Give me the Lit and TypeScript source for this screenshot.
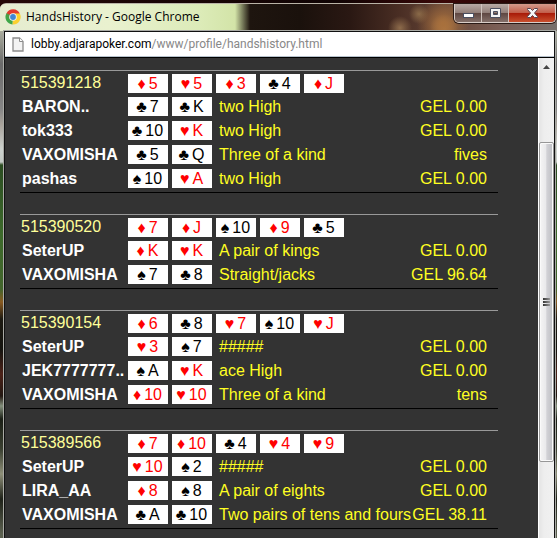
import { LitElement, html, css, svg } from "lit";
import { customElement, property } from "lit/decorators.js";

interface Player {
  name: string;
  cards: string[];
  result: string;
  amount: string;
}

interface Hand {
  id: string;
  board: string[];
  players: Player[];
}

const player = (name: string, cards: string, result: string, amount: string): Player => ({
  name,
  cards: cards.split(" "),
  result,
  amount,
});

const HANDS: Hand[] = [
  {
    id: "515391218",
    board: ["♦5", "♥5", "♦3", "♣4", "♦J"],
    players: [
      player("BARON..", "♣7 ♣K", "two High", "GEL 0.00"),
      player("tok333", "♣10 ♥K", "two High", "GEL 0.00"),
      player("VAXOMISHA", "♣5 ♣Q", "Three of a kind", "fives"),
      player("pashas", "♠10 ♥A", "two High", "GEL 0.00"),
    ],
  },
  {
    id: "515390520",
    board: ["♦7", "♦J", "♠10", "♦9", "♣5"],
    players: [
      player("SeterUP", "♦K ♥K", "A pair of kings", "GEL 0.00"),
      player("VAXOMISHA", "♠7 ♣8", "Straight/jacks", "GEL 96.64"),
    ],
  },
  {
    id: "515390154",
    board: ["♦6", "♣8", "♥7", "♠10", "♥J"],
    players: [
      player("SeterUP", "♥3 ♠7", "#####", "GEL 0.00"),
      player("JEK7777777..", "♠A ♥K", "ace High", "GEL 0.00"),
      player("VAXOMISHA", "♦10 ♥10", "Three of a kind", "tens"),
    ],
  },
  {
    id: "515389566",
    board: ["♦7", "♦10", "♣4", "♥4", "♥9"],
    players: [
      player("SeterUP", "♥10 ♠2", "#####", "GEL 0.00"),
      player("LIRA_AA", "♦8 ♠8", "A pair of eights", "GEL 0.00"),
      player("VAXOMISHA", "♣A ♣10", "Two pairs of tens and fours", "GEL 38.11"),
    ],
  },
];

@customElement("playing-cards")
export class PlayingCards extends LitElement {
  @property({ attribute: false }) cards: string[] = [];

  static styles = css`
    :host {
      display: flex;
      gap: 4px;
    }
    .card {
      box-sizing: border-box;
      display: flex;
      flex: none;
      justify-content: center;
      gap: 3px;
      width: 40px;
      height: 19px;
      padding-right: 1px;
      background: #fff;
      color: #000;
      line-height: 19px;
    }
    .red {
      color: #f00;
    }
  `;

  render() {
    return this.cards.map(
      (c) => html`<span class="card ${"♦♥".includes(c[0]) ? "red" : ""}"
        ><span>${c[0]}</span><span>${c.slice(1)}</span></span
      >`
    );
  }
}

@customElement("hand-table")
export class HandTable extends LitElement {
  @property({ attribute: false }) hand!: Hand;

  static styles = css`
    :host {
      display: block;
      border-top: 1px solid #999;
      border-bottom: 1px solid #000;
      padding-bottom: 1px;
    }
    table {
      width: 100%;
      table-layout: fixed;
      border-spacing: 0;
    }
    .name-col {
      width: 108px;
    }
    .cards-col {
      width: 91px;
    }
    .amount-col {
      width: 90px;
    }
    th,
    td {
      box-sizing: border-box;
      height: 24px;
      padding: 0;
      line-height: 24px;
      white-space: nowrap;
      text-align: left;
      vertical-align: top;
      color: #ff2;
    }
    .id {
      padding-left: 1px;
      font-weight: 400;
      color: #ff9;
    }
    .name {
      padding-left: 2px;
      color: #fff;
    }
    .board {
      padding-top: 3px;
    }
    .hole {
      padding-top: 2px;
    }
    .amount {
      padding-right: 11px;
      text-align: right;
    }
  `;

  render() {
    return html`<table>
      <colgroup>
        <col class="name-col" />
        <col class="cards-col" />
        <col />
        <col class="amount-col" />
      </colgroup>
      <thead>
        <tr>
          <th class="id" scope="col">${this.hand.id}</th>
          <td class="board" colspan="3">
            <playing-cards .cards=${this.hand.board}></playing-cards>
          </td>
        </tr>
      </thead>
      <tbody>
        ${this.hand.players.map(
          (p) => html`<tr>
            <th class="name" scope="row">${p.name}</th>
            <td class="hole"><playing-cards .cards=${p.cards}></playing-cards></td>
            <td>${p.result}</td>
            <td class="amount">${p.amount}</td>
          </tr>`
        )}
      </tbody>
    </table>`;
  }
}

const chromeLogo = svg`
  <path d="M8 8 L1.5 4.2 A7.5 7.5 0 0 1 14.8 4.6 Z" fill="#e33b2e"/>
  <path d="M8 8 L14.8 4.6 A7.5 7.5 0 0 1 7.4 15.5 Z" fill="#fbd12f"/>
  <path d="M8 8 L7.4 15.5 A7.5 7.5 0 0 1 1.5 4.2 Z" fill="#3fa648"/>
  <path d="M8 4.6 H14.8 L11 9.5 Z" fill="#fbd12f"/>
  <path d="M1.5 4.2 L5 10 L8 4.6 Z" fill="#e33b2e"/>
  <path d="M1.5 4.2 L4.9 9.8 L5 6 Z" fill="#3fa648"/>
  <circle cx="8" cy="8" r="3.8" fill="#f4f6f4"/>
  <circle cx="8" cy="8" r="2.9" fill="#3f86d6"/>`;

@customElement("app-root")
export class AppRoot extends LitElement {
  static styles = css`
    :host {
      display: flex;
      flex-direction: column;
      box-sizing: border-box;
      height: 100vh;
      padding-top: 3px;
      overflow: hidden;
      background: linear-gradient(90deg, #250706, #100404 60%, #3a0808 80%, #1a0303);
      font: 16px "Liberation Sans", Arial, sans-serif;
    }
    .window {
      flex: 1;
      min-height: 0;
      display: flex;
      flex-direction: column;
      padding: 0 2px 0 4px;
      border-top: 1px solid #b9b3a6;
      border-top-left-radius: 6px;
      background: linear-gradient(
        #c9d1b4 0,
        #a9ab9d 28px,
        #6a6a6a 60px,
        #868686 105px,
        #a8a29a 120px,
        #cdd2ce 145px,
        #c3c9c4 158px,
        #2c4d22 161px,
        #3d6a2b 230px,
        #43652c 285px,
        #8a5a20 298px,
        #1d1a12 315px,
        #15140f 345px,
        #4c2218 370px,
        #231812 392px,
        #84907c 402px,
        #1b1f16 415px,
        #3a3f30 445px,
        #8e8f78 470px,
        #1f2219 495px,
        #5c6150 530px
      );
    }
    .titlebar {
      display: flex;
      align-items: flex-start;
      height: 27px;
      margin: 0 -2px 0 -4px;
      border-top-left-radius: 5px;
      background:
        radial-gradient(circle at 443px 20px, #a8703c, #a8703c00 26px),
        radial-gradient(circle at 444px 24px, #b7814a, #b7814a00 14px),
        radial-gradient(circle at 419px 10px, #8a6a48, #8a6a4800 10px),
        radial-gradient(circle at 400px 24px, #8d6b4b, #8d6b4b00 12px),
        linear-gradient(
          90deg,
          #e6ecd0 0,
          #e9f1cf 110px,
          #dcebb8 200px,
          #d3e4a8 235px,
          #1e150f 250px,
          #1a110c 300px,
          #2a1813 350px,
          #4a2e24 400px,
          #6a4a3c 450px,
          #7b5f57 500px,
          #77706c 100%
        );
    }
    .caption {
      flex: 1;
      display: flex;
      align-items: center;
      gap: 5px;
      height: 26px;
      padding-left: 5px;
      margin: 0;
      color: #000;
      font: 12px/26px "Open Sans", "Noto Sans", sans-serif;
    }
    .logo {
      width: 16px;
      height: 16px;
    }
    .controls {
      display: flex;
      height: 18px;
      margin-right: 1px;
      border: 1px solid #d8cdc8;
      border-top: 0;
      border-radius: 0 0 5px 5px;
      box-shadow: 0 0 0 1px #2a1a16;
      overflow: hidden;
    }
    .control {
      display: grid;
      place-items: center;
      width: 27px;
      height: 18px;
      padding: 0;
      border: 0;
      border-right: 1px solid #cfc3be;
      background: linear-gradient(#b8aaa5, #93807a 48%, #5f4742 52%, #84706a);
    }
    .close {
      width: 46px;
      border-right: 0;
      background: linear-gradient(#d49a8c, #c25f4b 48%, #a81a08 52%, #c9502e);
    }
    .client {
      flex: 1;
      min-height: 0;
      display: flex;
      flex-direction: column;
      border: 1px solid #111;
      border-bottom: 0;
      outline: 1px solid #a9aaa5;
      background: #333;
    }
    .address {
      display: flex;
      align-items: center;
      gap: 7px;
      flex: none;
      height: 25px;
      padding-left: 7px;
      border-bottom: 1px solid #000;
      box-shadow: inset 0 -1px #b6c1cb;
      background: #fff;
      color: #888;
      font: 12px/25px Roboto, "Open Sans", sans-serif;
      white-space: nowrap;
    }
    .domain {
      color: #000;
    }
    .viewport {
      flex: 1;
      min-height: 0;
      display: flex;
    }
    .page {
      flex: 1;
      display: flex;
      flex-direction: column;
      gap: 21px;
      padding: 12px 40px 0 15px;
      overflow: hidden;
    }
    .page > hand-table {
      flex: none;
    }
    .scrollbar {
      display: flex;
      flex-direction: column;
      width: 15px;
      border-left: 1px solid #fff;
      background: linear-gradient(90deg, #e4e4e4, #eee 5px, #f1f1f1);
    }
    .arrow {
      display: grid;
      place-items: center;
      height: 17px;
      padding: 0;
      border: 0;
      background: none;
    }
    .before {
      flex: 67;
    }
    .thumb {
      flex: 320;
      box-sizing: border-box;
      display: flex;
      flex-direction: column;
      justify-content: center;
      align-items: center;
      gap: 1px;
      border: 1px solid #979797;
      border-radius: 2px;
      box-shadow: inset 0 0 0 1px #fafafa;
      background: linear-gradient(90deg, #f5f5f5, #e9e9eb 45%, #d2d2d6 52%, #bdbec3);
    }
    .grip {
      width: 7px;
      height: 2px;
      background: linear-gradient(90deg, #333, #999);
    }
    .after {
      flex: 76;
    }
  `;

  render() {
    return html`
      <main class="window">
        <header class="titlebar">
          <h1 class="caption">
            <svg class="logo" viewBox="0 0 16 16" aria-hidden="true">${chromeLogo}</svg>
            HandsHistory - Google Chrome
          </h1>
          <div class="controls">
            <button class="control" aria-label="Minimize">
              <svg width="13" height="13" viewBox="0 0 13 13">
                <rect x="1.5" y="6.5" width="10" height="4" fill="#fff" stroke="#4b4f60" />
              </svg>
            </button>
            <button class="control" aria-label="Maximize">
              <svg width="13" height="11" viewBox="0 0 13 11">
                <path
                  d="M1.5 .5H11.5V9.5H1.5Z M4.5 3.5V6.5H8.5V3.5Z"
                  fill="#f4f4f4"
                  fill-rule="evenodd"
                  stroke="#4b4f60"
                />
              </svg>
            </button>
            <button class="control close" aria-label="Close">
              <svg width="13" height="11" viewBox="0 0 13 11">
                <path
                  d="M1.5 .5H4.5L6.5 2.5L8.5 .5H11.5V1.5L8.5 5L11.5 8.5V9.5H8.5L6.5 7.5L4.5 9.5H1.5V8.5L4.5 5L1.5 1.5Z"
                  fill="#f6f6f6"
                  stroke="#5a4450"
                />
              </svg>
            </button>
          </div>
        </header>
        <div class="client">
          <div class="address">
            <svg width="12" height="15" viewBox="0 0 12 15" aria-hidden="true">
              <path d="M1 1H7.5L11 4.5V14H1Z" fill="#f3f3f3" stroke="#8c8c8c" stroke-width="1.3" />
              <path d="M7.5 1V4.5H11" fill="#fff" stroke="#8c8c8c" />
            </svg>
            <span><span class="domain">lobby.adjarapoker.com</span>/www/profile/handshistory.html</span>
          </div>
          <div class="viewport">
            <section class="page">
              ${HANDS.map((h) => html`<hand-table .hand=${h}></hand-table>`)}
            </section>
            <div class="scrollbar">
              <button class="arrow" aria-label="Scroll up">
                <svg width="7" height="4" viewBox="0 0 7 4"><path d="M0 4L3.5 0L7 4Z" fill="#444" /></svg>
              </button>
              <div class="before"></div>
              <div class="thumb">
                <span class="grip"></span><span class="grip"></span><span class="grip"></span>
              </div>
              <div class="after"></div>
            </div>
          </div>
        </div>
      </main>
    `;
  }
}
